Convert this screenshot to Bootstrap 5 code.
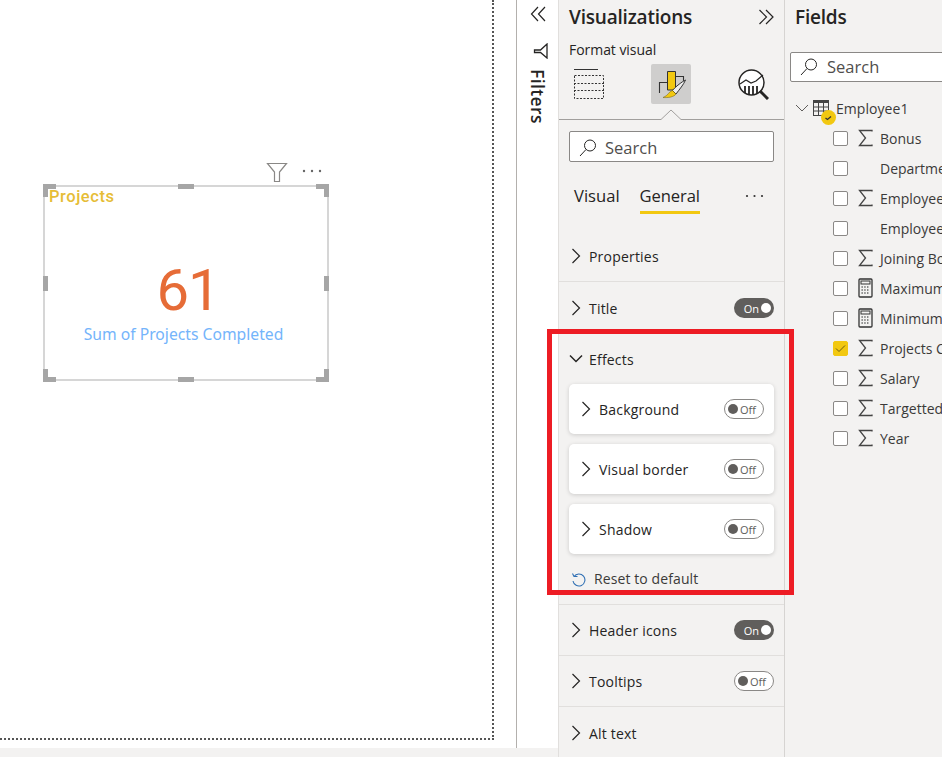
<!DOCTYPE html>
<html lang="en">
<head>
<meta charset="utf-8">
<title>Power BI format pane</title>
<link href="https://cdn.jsdelivr.net/npm/bootstrap@5.3.0/dist/css/bootstrap.min.css" rel="stylesheet">
<style>
html,body{height:757px;overflow:hidden;background:#fff}
body{font-family:"Open Sans","Noto Sans",sans-serif;color:#252423;font-size:14px}
.shell{width:942px;height:757px;position:relative}
.canvas-col{width:516px;position:relative;background:#fff;flex:none}
.canvas-page{width:494px;height:740px;border-right:2px dotted #555;border-bottom:2px dotted #555}
.canvas-foot{position:absolute;left:0;width:558px;top:748px;height:9px;background:#f3f2f1}
.visual{position:absolute;left:43px;top:185px;width:286px;height:196px;border:2px solid #d6d6d6}
.v-title{position:absolute;left:4px;top:0;font-family:"Roboto",sans-serif;font-weight:500;font-size:16.5px;color:#e6bd36;letter-spacing:.55px;line-height:20px}
.v-num{position:absolute;left:4px;right:0;top:71px;text-align:center;font-family:"Roboto",sans-serif;font-weight:400;font-size:58px;line-height:64px;color:#e66c37;letter-spacing:-1px}
.v-sub{position:absolute;left:0;right:5px;top:136px;text-align:center;font-size:15.7px;line-height:22px;color:#74b4fb;font-family:"Noto Sans",sans-serif;font-weight:400;white-space:nowrap}
.hd{position:absolute;background:#a6a6a6}
.v-tools{position:absolute;left:266px;top:162px;width:60px;height:20px}
.filter-col{width:42px;flex:none;background:#fff;border-left:1px solid #b3b0ad;position:relative}
.filter-word{position:absolute;left:11px;top:69px;writing-mode:vertical-rl;font-size:17.5px;font-weight:600;color:#252423;line-height:20px;letter-spacing:.4px}
.viz-col{width:227px;flex:none;background:#f3f2f1;border-left:1px solid #e1dfdd;border-right:1px solid #d6d4d2;overflow:hidden}
.fields-col{flex:1;background:#f3f2f1;overflow:hidden;min-width:0}
.pane-title{font-size:19px;font-weight:600;line-height:24px;color:#252423;letter-spacing:-.2px}
.fmt{font-size:14px;font-weight:500;line-height:20px;letter-spacing:-.05px}
.icon-row{height:40px;margin-left:15px;margin-right:15px}
.icon-sel{width:40px;height:40px;background:#cfcecd;border-radius:2px}
.search-box{height:31px;background:#fff;border:1px solid #8a8886;border-radius:2px;font-size:16.5px;color:#504e4c;gap:8px;padding-left:9px}
.viz-search{margin:11px 10px 0;padding-top:3px}
.fmt-tabs{margin:17px 10px 0 15px;height:34px;font-size:16.6px;line-height:34px;position:relative}
.tab-on{font-weight:500;border-bottom:3px solid #f2c811;height:35px;letter-spacing:-.1px}
.sec{height:52px;border-bottom:1px solid #e1dfdd;padding:0 10px 0 12px;font-size:14px;font-weight:500;gap:8px;letter-spacing:.2px}
.chev{flex:none}
.tgl{width:40px;height:20px;border-radius:10px;font-size:11px;line-height:1;margin-left:auto;gap:2px;padding:0 3px;letter-spacing:0;font-weight:400}
.tgl-on{background:#605e5c;color:#fff;justify-content:flex-end}
.tgl-off{background:#fff;border:1px solid #8a8886;color:#605e5c}
.tgl-dot{width:10px;height:10px;border-radius:50%;flex:none}
.tgl-on .tgl-dot{background:#fff}
.tgl-off .tgl-dot{background:#605e5c}
.eff{height:271px;padding:0 10px;border-bottom:1px solid #e1dfdd}
.eff-head{height:50px;font-size:14px;font-weight:500;gap:6px;letter-spacing:.2px}
.eff-card{height:50px;background:#fff;border-radius:5px;box-shadow:0 1px 4px rgba(0,0,0,.16);margin-bottom:10px;padding:0 10px 0 12px;font-size:14px;font-weight:500;gap:8px;letter-spacing:.2px}
.reset-line{font-size:14px;color:#3b3a39;gap:8px;margin-top:15px;padding-left:2px;line-height:20px;letter-spacing:.1px}
.red-box{position:absolute;left:547px;top:329px;width:247px;height:266px;border:5px solid #ed1c24;pointer-events:none}
.fld-search{margin:23px 0 0 5px;width:170px;height:30px}
.tree-head{margin:14px 0 0 10px;height:24px;font-size:14px;color:#3b3a39;white-space:nowrap;letter-spacing:.05px}
.fld-row{height:30px;padding-left:48px;white-space:nowrap;font-size:14px;color:#3b3a39;overflow:hidden}
.ck{width:15px;height:15px;border:1px solid #8a8886;border-radius:2px;background:#fff;flex:none;margin-right:10px}
.ck-on{background:#f2c811;border-color:#f2c811}
.fld-ic{width:15px;height:20px;flex:none;margin-right:7px}
</style>
</head>
<body>
<div class="shell d-flex">
  <div class="canvas-col">
    <div class="canvas-page"></div>
    <svg class="v-tools" viewBox="0 0 60 20"><path d="M1.500 1.500H20.500L13.500 10V19.500H8.500V10Z" fill="none" stroke="#8a8886" stroke-width="1.200"/><circle cx="38" cy="9" r="1.200" fill="#666"/><circle cx="46" cy="9" r="1.200" fill="#666"/><circle cx="54" cy="9" r="1.200" fill="#666"/></svg>
    <div class="visual">
      <div class="v-title">Projects</div>
      <div class="v-num">61</div>
      <div class="v-sub">Sum of Projects Completed</div>
      <div class="hd" style="left:-2px;top:-3px;width:13px;height:5px"></div><div class="hd" style="left:-2px;top:-3px;width:5px;height:13px"></div>
      <div class="hd" style="right:-2px;top:-3px;width:13px;height:5px"></div><div class="hd" style="right:-2px;top:-3px;width:5px;height:13px"></div>
      <div class="hd" style="left:-2px;bottom:-3px;width:13px;height:5px"></div><div class="hd" style="left:-2px;bottom:-3px;width:5px;height:13px"></div>
      <div class="hd" style="right:-2px;bottom:-3px;width:13px;height:5px"></div><div class="hd" style="right:-2px;bottom:-3px;width:5px;height:13px"></div>
      <div class="hd" style="left:133px;top:-3px;width:16px;height:5px"></div>
      <div class="hd" style="left:133px;bottom:-3px;width:16px;height:5px"></div>
      <div class="hd" style="left:-2px;top:89px;width:5px;height:15px"></div>
      <div class="hd" style="right:-2px;top:89px;width:5px;height:15px"></div>
    </div>
  </div>

  <div class="filter-col">
    <svg class="d-block" style="margin:6px 0 0 13px" width="16" height="16" viewBox="0 0 16 16"><path d="M8 1 1.500 8 8 15M15 1 8.500 8l6.500 7" fill="none" stroke="#252423" stroke-width="1.200"/></svg>
    <svg class="d-block" style="margin:21px 0 0 16px" width="15" height="16" viewBox="0 0 15 16"><path d="M14 1V15L7.500 9.500H1.500V7H7.500Z" fill="none" stroke="#252423" stroke-width="1.300"/></svg>
    <div class="filter-word">Filters</div>
  </div>

  <div class="viz-col">
    <div class="d-flex align-items-center justify-content-between" style="height:24px;margin:5px 9px 0 10px">
      <span class="pane-title">Visualizations</span>
      <svg width="17" height="16" viewBox="0 0 17 16"><path d="M1.500 1 8.500 8l-7 7M8 1 15 8l-7 7" fill="none" stroke="#252423" stroke-width="1.200"/></svg>
    </div>
    <div class="fmt" style="margin:11px 0 0 10px">Format visual</div>
    <div class="icon-row d-flex align-items-center justify-content-between" style="margin-top:4px">
      <svg width="30" height="30" viewBox="0 0 30 30"><path d="M0 .5H24" stroke="#333" fill="none"/><rect x=".5" y="6.500" width="29" height="23" fill="none" stroke="#333" stroke-dasharray="2 1.500"/><path d="M0 14.500H30M0 21.500H30" stroke="#333" stroke-dasharray="2 1.500"/></svg>
      <div class="icon-sel">
        <svg class="d-block" width="40" height="40" viewBox="0 0 40 40"><path d="M16.500 7.500h8V26h-8z" fill="#f2c811" stroke="#333"/><path d="M8.500 29V18.500h8M24.500 12.500h8V17" fill="none" stroke="#333" stroke-width="1.100"/><path d="M34.500 16C32 17 24 23 21.500 26.500L25 30C28 26 33 20 34.500 16Z" fill="#eee" stroke="#333"/><path d="M12 33.500C17 34 23 33 25 30L21.500 26.500C18 27 17 32 12 33.500Z" fill="#f2c811" stroke="#6b5b10" stroke-width=".5"/></svg>
      </div>
      <svg width="31" height="31" viewBox="0 0 31 31"><circle cx="13.500" cy="13.500" r="12.500" fill="#fff" stroke="#252423" stroke-width="1.500"/><path d="M2 15l6-4 5 3 5-2 7-6" fill="none" stroke="#252423" stroke-width="1.200"/><path d="M7 17v7M11 17v9M15 17v9M19 17v8" stroke="#252423" stroke-width="1.800"/><path d="M22 22l8 8" stroke="#252423" stroke-width="3"/></svg>
    </div>
    <svg class="d-block" width="226" height="16" viewBox="0 0 226 16"><path d="M0 15.500H102L112 6l10 9.500H226" fill="none" stroke="#a19f9d"/></svg>
    <div class="search-box viz-search d-flex align-items-center">
      <svg width="18" height="18" viewBox="0 0 18 18"><circle cx="11" cy="6.500" r="5.500" fill="none" stroke="#252423"/><path d="M7 10.500 1 17" stroke="#252423"/></svg><span>Search</span>
    </div>
    <div class="fmt-tabs d-flex">
      <span style="margin-right:20px">Visual</span>
      <span class="tab-on">General</span>
      <svg class="position-absolute" style="right:10px;top:15px" width="19" height="4" viewBox="0 0 19 4"><circle cx="2" cy="2" r="1.100" fill="#333"/><circle cx="9.500" cy="2" r="1.100" fill="#333"/><circle cx="17" cy="2" r="1.100" fill="#333"/></svg>
    </div>

    <div class="sec d-flex align-items-center" style="margin-top:17px;padding-top:1px"><svg class="chev" width="10" height="16" viewBox="0 0 10 16"><path d="M1.500 1 8.500 8l-7 7" fill="none" stroke="#252423" stroke-width="1.200"/></svg>Properties</div>
    <div class="sec d-flex align-items-center" style="border-bottom:0"><svg class="chev" width="10" height="16" viewBox="0 0 10 16"><path d="M1.500 1 8.500 8l-7 7" fill="none" stroke="#252423" stroke-width="1.200"/></svg>Title<span class="tgl tgl-on d-flex align-items-center">On<span class="tgl-dot"></span></span></div>

    <div class="eff">
      <div class="eff-head d-flex align-items-center"><svg width="14" height="10" viewBox="0 0 14 10"><path d="M1 1.500 7 7.500l6-6" fill="none" stroke="#252423" stroke-width="1.500"/></svg>Effects</div>
      <div class="eff-card d-flex align-items-center"><svg class="chev" width="10" height="16" viewBox="0 0 10 16"><path d="M1.500 1 8.500 8l-7 7" fill="none" stroke="#252423" stroke-width="1.200"/></svg>Background<span class="tgl tgl-off d-flex align-items-center"><span class="tgl-dot"></span>Off</span></div>
      <div class="eff-card d-flex align-items-center"><svg class="chev" width="10" height="16" viewBox="0 0 10 16"><path d="M1.500 1 8.500 8l-7 7" fill="none" stroke="#252423" stroke-width="1.200"/></svg>Visual border<span class="tgl tgl-off d-flex align-items-center"><span class="tgl-dot"></span>Off</span></div>
      <div class="eff-card d-flex align-items-center"><svg class="chev" width="10" height="16" viewBox="0 0 10 16"><path d="M1.500 1 8.500 8l-7 7" fill="none" stroke="#252423" stroke-width="1.200"/></svg>Shadow<span class="tgl tgl-off d-flex align-items-center"><span class="tgl-dot"></span>Off</span></div>
      <div class="reset-line d-flex align-items-center"><svg width="15" height="15" viewBox="0 0 15 15"><path d="M3 4.500A6 6 0 1 1 2 9M1.500 1.500 3 4.500 6.500 4.500" fill="none" stroke="#2f6fb3" stroke-width="1.100"/></svg>Reset to default</div>
    </div>

    <div class="sec d-flex align-items-center" style="height:51px"><svg class="chev" width="10" height="16" viewBox="0 0 10 16"><path d="M1.500 1 8.500 8l-7 7" fill="none" stroke="#252423" stroke-width="1.200"/></svg>Header icons<span class="tgl tgl-on d-flex align-items-center">On<span class="tgl-dot"></span></span></div>
    <div class="sec d-flex align-items-center" style="height:51px"><svg class="chev" width="10" height="16" viewBox="0 0 10 16"><path d="M1.500 1 8.500 8l-7 7" fill="none" stroke="#252423" stroke-width="1.200"/></svg>Tooltips<span class="tgl tgl-off d-flex align-items-center"><span class="tgl-dot"></span>Off</span></div>
    <div class="sec d-flex align-items-center" style="border-bottom:0"><svg class="chev" width="10" height="16" viewBox="0 0 10 16"><path d="M1.500 1 8.500 8l-7 7" fill="none" stroke="#252423" stroke-width="1.200"/></svg>Alt text</div>
  </div>

  <div class="fields-col">
    <div class="pane-title" style="margin:5px 0 0 10px">Fields</div>
    <div class="search-box fld-search d-flex align-items-center">
      <svg width="18" height="18" viewBox="0 0 18 18" style="margin-right:1px"><circle cx="11" cy="6.500" r="5.500" fill="none" stroke="#252423"/><path d="M7 10.500 1 17" stroke="#252423"/></svg><span>Search</span>
    </div>
    <div class="tree-head d-flex align-items-center position-relative">
      <svg width="14" height="8" viewBox="0 0 14 8" style="margin-right:4px"><path d="M1 1l6 6 6-6" fill="none" stroke="#605e5c"/></svg>
      <svg width="16" height="16" viewBox="0 0 16 16" style="margin-right:7px"><rect x=".5" y=".5" width="15" height="15" fill="none" stroke="#444"/><path d="M0 1.500H16" stroke="#444" stroke-width="3"/><path d="M.5 7H16M.5 11H16M5.500 3v13M10.500 3v13" stroke="#444"/></svg>
      <svg class="position-absolute" style="left:26px;top:14px" width="15" height="15" viewBox="0 0 15 15"><circle cx="7.500" cy="7.500" r="7.500" fill="#f2c811"/><path d="M4.500 8l2 1.500 3.500-3" fill="none" stroke="#333" stroke-width="1.300"/></svg>
      Employee1
    </div>
    <div style="height:3px"></div>
    <div class="fld-row d-flex align-items-center"><span class="ck"></span><svg class="fld-ic" viewBox="0 0 15 20"><path d="M14 3.500V2.500H1.500L7.500 10 1.500 17.500H14V16.500" fill="none" stroke="#444" stroke-width="1.300"/></svg>Bonus</div>
    <div class="fld-row d-flex align-items-center"><span class="ck"></span><span class="fld-ic"></span>Department</div>
    <div class="fld-row d-flex align-items-center"><span class="ck"></span><svg class="fld-ic" viewBox="0 0 15 20"><path d="M14 3.500V2.500H1.500L7.500 10 1.500 17.500H14V16.500" fill="none" stroke="#444" stroke-width="1.300"/></svg>Employee ID</div>
    <div class="fld-row d-flex align-items-center"><span class="ck"></span><span class="fld-ic"></span>Employee Name</div>
    <div class="fld-row d-flex align-items-center"><span class="ck"></span><svg class="fld-ic" viewBox="0 0 15 20"><path d="M14 3.500V2.500H1.500L7.500 10 1.500 17.500H14V16.500" fill="none" stroke="#444" stroke-width="1.300"/></svg>Joining Bonus</div>
    <div class="fld-row d-flex align-items-center"><span class="ck"></span><svg class="fld-ic" viewBox="0 0 15 20"><rect x="1" y="1" width="13" height="18" rx="1" fill="none" stroke="#333" stroke-width="1.300"/><rect x="3" y="3" width="9" height="3" fill="none" stroke="#333"/><path d="M3.500 9h8M3.500 12h8M3.500 15h8" stroke="#555" stroke-width="1.400" stroke-dasharray="1.300 1.500"/></svg>Maximum Salary</div>
    <div class="fld-row d-flex align-items-center"><span class="ck"></span><svg class="fld-ic" viewBox="0 0 15 20"><rect x="1" y="1" width="13" height="18" rx="1" fill="none" stroke="#333" stroke-width="1.300"/><rect x="3" y="3" width="9" height="3" fill="none" stroke="#333"/><path d="M3.500 9h8M3.500 12h8M3.500 15h8" stroke="#555" stroke-width="1.400" stroke-dasharray="1.300 1.500"/></svg>Minimum Salary</div>
    <div class="fld-row d-flex align-items-center"><span class="ck ck-on d-flex align-items-center justify-content-center"><svg width="11" height="9" viewBox="0 0 11 9"><path d="M1 4.500l3 3 6-6" fill="none" stroke="#6b5b10" stroke-width="1"/></svg></span><svg class="fld-ic" viewBox="0 0 15 20"><path d="M14 3.500V2.500H1.500L7.500 10 1.500 17.500H14V16.500" fill="none" stroke="#444" stroke-width="1.300"/></svg>Projects Completed</div>
    <div class="fld-row d-flex align-items-center"><span class="ck"></span><svg class="fld-ic" viewBox="0 0 15 20"><path d="M14 3.500V2.500H1.500L7.500 10 1.500 17.500H14V16.500" fill="none" stroke="#444" stroke-width="1.300"/></svg>Salary</div>
    <div class="fld-row d-flex align-items-center"><span class="ck"></span><svg class="fld-ic" viewBox="0 0 15 20"><path d="M14 3.500V2.500H1.500L7.500 10 1.500 17.500H14V16.500" fill="none" stroke="#444" stroke-width="1.300"/></svg>Targetted Projects</div>
    <div class="fld-row d-flex align-items-center"><span class="ck"></span><svg class="fld-ic" viewBox="0 0 15 20"><path d="M14 3.500V2.500H1.500L7.500 10 1.500 17.500H14V16.500" fill="none" stroke="#444" stroke-width="1.300"/></svg>Year</div>
  </div>

  <div class="canvas-foot"></div>
  <div class="red-box"></div>
</div>
<script src="https://cdn.jsdelivr.net/npm/bootstrap@5.3.0/dist/js/bootstrap.bundle.min.js"></script>
</body>
</html>
